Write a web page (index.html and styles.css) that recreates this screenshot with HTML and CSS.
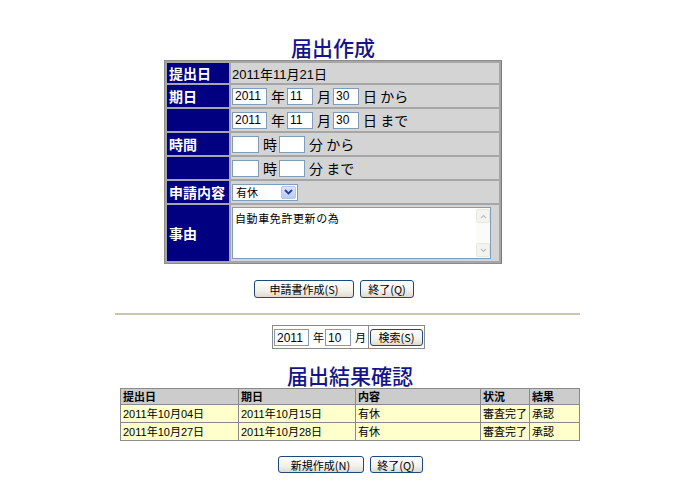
FILE: index.html
```html
<!DOCTYPE html>
<html lang="ja">
<head>
    <meta charset="UTF-8">
    <title>届出作成</title>
    <link rel="stylesheet" href="styles.css">
</head>
<body>
    <div class="page">
        <!-- 届出作成 -->
        <div class="form-area">
            <h1 class="title">届出作成</h1>
            <table class="form-table">
                <tr class="row-short">
                    <th>提出日</th>
                    <td>2011年11月21日</td>
                </tr>
                <tr>
                    <th>期日</th>
                    <td>
                        <input class="box w-year" value="2011"><span class="unit">年</span><input class="box w-small" value="11"><span class="unit">月</span><input class="box w-small" value="30"><span class="unit">日 から</span>
                    </td>
                </tr>
                <tr>
                    <th></th>
                    <td>
                        <input class="box w-year" value="2011"><span class="unit">年</span><input class="box w-small" value="11"><span class="unit">月</span><input class="box w-small" value="30"><span class="unit">日 まで</span>
                    </td>
                </tr>
                <tr>
                    <th>時間</th>
                    <td>
                        <input class="box w-time" value=""><span class="unit">時</span><input class="box w-small" value=""><span class="unit">分 から</span>
                    </td>
                </tr>
                <tr>
                    <th></th>
                    <td>
                        <input class="box w-time" value=""><span class="unit">時</span><input class="box w-small" value=""><span class="unit">分 まで</span>
                    </td>
                </tr>
                <tr>
                    <th>申請内容</th>
                    <td>
                        <div class="select">
                            <span class="select-text">有休</span>
                            <span class="select-arrow">
                                <svg width="9" height="6" viewBox="0 0 9 6"><path d="M1 1 L4.5 4.5 L8 1" fill="none" stroke="#2a3f8f" stroke-width="1.8"/></svg>
                            </span>
                        </div>
                    </td>
                </tr>
                <tr class="row-tall">
                    <th>事由</th>
                    <td>
                        <div class="textarea">
                            <div class="textarea-text">自動車免許更新の為</div>
                            <div class="scrollbar">
                                <span class="scroll-btn">
                                    <svg width="7" height="5" viewBox="0 0 7 5"><path d="M1 4 L3.5 1.5 L6 4" fill="none" stroke="#b8c0cc" stroke-width="1.2"/></svg>
                                </span>
                                <span class="scroll-btn">
                                    <svg width="7" height="5" viewBox="0 0 7 5"><path d="M1 1 L3.5 3.5 L6 1" fill="none" stroke="#b8c0cc" stroke-width="1.2"/></svg>
                                </span>
                            </div>
                        </div>
                    </td>
                </tr>
            </table>
            <div class="buttons buttons-form">
                <button class="btn btn-create">申請書作成(S)</button>
                <button class="btn btn-quit">終了(Q)</button>
            </div>
        </div>

        <hr class="divider">

        <!-- 届出結果確認 -->
        <div class="result-area">
            <table class="search-box">
                <tr>
                    <td class="search-fields">
                        <input class="box w-year" value="2011"><span class="unit-s">年</span><input class="box w-small" value="10"><span class="unit-s">月</span>
                    </td>
                    <td class="search-action">
                        <button class="btn btn-search">検索(S)</button>
                    </td>
                </tr>
            </table>

            <h1 class="title title-result">届出結果確認</h1>
            <table class="result-table">
                <tr>
                    <th class="c-date">提出日</th>
                    <th class="c-date2">期日</th>
                    <th class="c-kind">内容</th>
                    <th class="c-state">状況</th>
                    <th class="c-result">結果</th>
                </tr>
                <tr>
                    <td>2011年10月04日</td>
                    <td>2011年10月15日</td>
                    <td>有休</td>
                    <td>審査完了</td>
                    <td>承認</td>
                </tr>
                <tr>
                    <td>2011年10月27日</td>
                    <td>2011年10月28日</td>
                    <td>有休</td>
                    <td>審査完了</td>
                    <td>承認</td>
                </tr>
            </table>
            <div class="buttons buttons-result">
                <button class="btn btn-new">新規作成(N)</button>
                <button class="btn btn-quit2">終了(Q)</button>
            </div>
        </div>
    </div>
</body>
</html>
```

FILE: styles.css
```css
:root {
    --navy: #000080;
    --title: #14148a;
    --cell: #d4d4d4;
    --grid: #a6a6a6;
    --input-border: #7f9db9;
    --row-yellow: #ffffcc;
    --head-gray: #cccccc;
}

* {
    margin: 0;
    padding: 0;
    box-sizing: border-box;
}

body {
    background: #ffffff;
    color: #000000;
    font-family: "Liberation Sans", "Noto Sans CJK JP", sans-serif;
}

.page {
    width: 700px;
    padding-top: 35px;
}

.title {
    font-family: "Noto Sans CJK JP", sans-serif;
    font-size: 21px;
    font-weight: 500;
    line-height: 24px;
    color: var(--title);
    text-align: center;
}

/* form */
.form-area {
    width: 338px;
    margin-left: 164px;
}

.form-area .title {
    margin-bottom: 1px;
}

.form-table {
    width: 338px;
    border-collapse: separate;
    border-spacing: 2px;
    background: var(--grid);
    border: 1px solid #8c8c8c;
    border-right-color: #7a7a7a;
}

.form-table th {
    width: 62px;
    height: 22px;
    background: var(--navy);
    color: #ffffff;
    font-family: "Noto Sans CJK JP", sans-serif;
    font-size: 14px;
    font-weight: bold;
    text-align: left;
    padding: 0 2px;
    white-space: nowrap;
}

.form-table td {
    background: var(--cell);
    font-size: 13px;
    padding: 0 0 0 1px;
    white-space: nowrap;
    vertical-align: middle;
}

.form-table .row-short th,
.form-table .row-short td {
    height: 18px;
}

.form-table .row-tall th,
.form-table .row-tall td {
    height: 56px;
}

.box {
    display: inline-block;
    vertical-align: middle;
    height: 17px;
    border: 1px solid var(--input-border);
    background: #ffffff;
    font-family: "Liberation Sans", sans-serif;
    font-size: 12px;
    padding: 0 2px;
    outline: none;
}

.w-year {
    width: 35px;
}

.w-small {
    width: 26px;
}

.w-time {
    width: 27px;
}

.unit {
    display: inline-block;
    vertical-align: middle;
    font-family: "Noto Sans CJK JP", sans-serif;
    font-size: 14px;
    line-height: 17px;
    margin: 0 2px 0 4px;
}

.select {
    display: flex;
    align-items: center;
    justify-content: space-between;
    width: 66px;
    height: 17px;
    border: 1px solid var(--input-border);
    background: #ffffff;
    padding: 1px;
}

.select-text {
    font-family: "Noto Sans CJK JP", sans-serif;
    font-size: 11px;
    line-height: 13px;
    padding-left: 2px;
}

.select-arrow {
    display: flex;
    align-items: center;
    justify-content: center;
    width: 15px;
    height: 13px;
    background: linear-gradient(#d9e5fb, #b7cbf2);
    border: 1px solid #b3c7ee;
    border-radius: 2px;
}

.textarea {
    display: flex;
    width: 259px;
    height: 52px;
    border: 1px solid var(--input-border);
    background: #ffffff;
}

.textarea-text {
    flex: 1;
    font-family: "Noto Sans CJK JP", sans-serif;
    font-size: 11px;
    letter-spacing: 0.6px;
    padding: 3px 2px;
    line-height: 14px;
}

.scrollbar {
    width: 14px;
    display: flex;
    flex-direction: column;
    justify-content: space-between;
    background: #fbfbf8;
    padding: 1px 0;
}

.scroll-btn {
    display: flex;
    align-items: center;
    justify-content: center;
    height: 14px;
    background: #f4f4ef;
    border: 1px solid #e8e8e2;
    border-radius: 2px;
}

/* buttons */
.buttons {
    display: flex;
    justify-content: center;
    gap: 6px;
}

.buttons-form {
    margin-top: 16px;
    margin-left: 2px;
}

.btn {
    height: 18px;
    border: 1px solid #1c4a7a;
    border-radius: 3px;
    background: linear-gradient(#ffffff, #f2f1eb 60%, #dedbd0);
    font-family: "Noto Sans CJK JP", sans-serif;
    font-size: 11px;
    line-height: 14px;
    color: #000000;
    padding: 0;
}

.btn-create {
    width: 100px;
}

.btn-quit {
    width: 54px;
}

.btn-search {
    width: 53px;
    height: 17px;
}

.btn-new {
    width: 86px;
    height: 17px;
}

.btn-quit2 {
    width: 53px;
    height: 17px;
}

/* divider */
.divider {
    width: 465px;
    margin: 15px 0 0 115px;
    border: none;
    height: 2px;
    background: #c9c6b6;
}

/* results */
.result-area {
    width: 460px;
    margin-left: 120px;
}

.search-box {
    margin: 10px 0 0 152px;
    border-collapse: collapse;
    border: 1px solid #8a8a8a;
    height: 24px;
}

.search-box td {
    padding: 0 1px;
    vertical-align: middle;
    white-space: nowrap;
}

.search-fields {
    padding-left: 2px;
}

.search-action {
    border-left: 1px solid #8a8a8a;
    padding: 0 1px 0 2px;
}

.unit-s {
    display: inline-block;
    vertical-align: middle;
    font-family: "Noto Sans CJK JP", sans-serif;
    font-size: 11px;
    line-height: 17px;
    margin: 0 1px 0 4px;
}

.title-result {
    margin-top: 14px;
    margin-bottom: 1px;
}

.result-table {
    width: 460px;
    border-collapse: collapse;
    border: 1px solid #8a8a8a;
    font-family: "Noto Sans CJK JP", sans-serif;
    font-size: 11px;
}

.result-table th,
.result-table td {
    border: 1px solid #8a8a8a;
    padding: 0 2px;
    text-align: left;
    white-space: nowrap;
}

.result-table th {
    height: 16px;
    background: var(--head-gray);
    font-weight: bold;
    line-height: 13px;
}

.result-table td {
    height: 18px;
    line-height: 14px;
    background: var(--row-yellow);
    font-family: "Liberation Sans", "Noto Sans CJK JP", sans-serif;
}

.c-date {
    width: 118px;
}

.c-date2 {
    width: 117px;
}

.c-kind {
    width: 125px;
}

.c-state {
    width: 48px;
}

.buttons-result {
    margin-top: 15px;
}
```
